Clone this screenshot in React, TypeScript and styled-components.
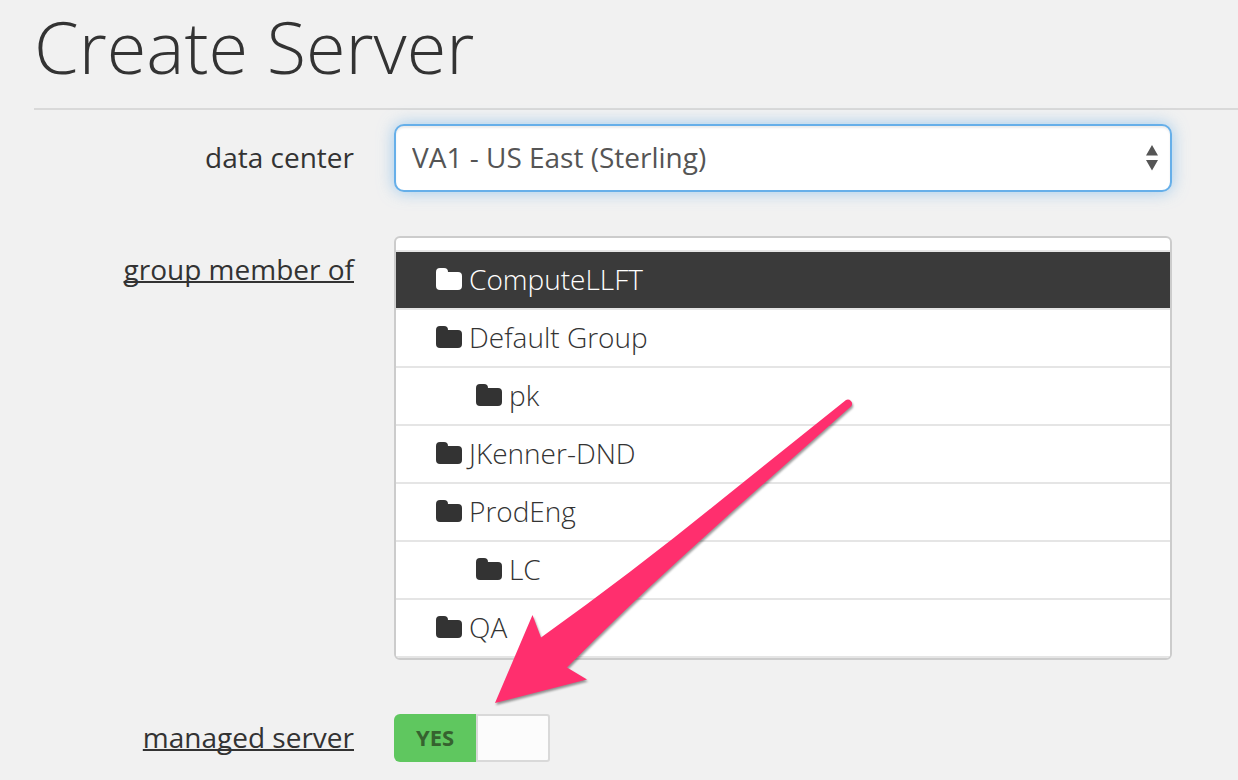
import React, { useState } from "react";
import styled, { createGlobalStyle } from "styled-components";

const GlobalStyle = createGlobalStyle`
  *, *::before, *::after { box-sizing: border-box; }
  body {
    margin: 0;
    background: #f1f1f1;
    color: #333;
    font-family: "Open Sans", sans-serif;
    font-size: 28px;
  }
`;

const Page = styled.main`
  position: relative;
  padding-left: 34px;
`;

const Title = styled.h1`
  margin: 0;
  padding-bottom: 16px;
  border-bottom: 2px solid #d9d9d9;
  font-size: 72px;
  font-weight: 300;
  line-height: 92px;
`;

const Form = styled.form`
  display: flex;
  flex-direction: column;
  gap: 44px;
  padding: 14px 66px 0 0;
`;

const Field = styled.div`
  display: grid;
  grid-template-columns: 320px minmax(0, 1fr);
  column-gap: 40px;
  align-items: start;
`;

const Label = styled.label<{ $hint?: boolean }>`
  text-align: right;
  line-height: 66px;
  text-decoration: ${(p) => (p.$hint ? "underline" : "none")};
  text-decoration-thickness: 2px;
  text-decoration-skip-ink: none;
`;

const SelectBox = styled.div`
  position: relative;
  display: flex;
`;

const Select = styled.select`
  appearance: none;
  flex: 1;
  height: 68px;
  padding: 0 48px 2px 16px;
  border: 2px solid #66afe9;
  border-radius: 10px;
  outline: 0;
  background: #fff;
  color: #555;
  font: inherit;
  box-shadow: inset 0 2px 2px rgba(0, 0, 0, 0.075), 0 0 16px rgba(102, 175, 233, 0.6);
`;

const Stepper = styled.svg`
  position: absolute;
  right: 14px;
  top: 21px;
  pointer-events: none;
`;

const GroupList = styled.ul`
  display: flex;
  flex-direction: column;
  justify-content: flex-end;
  height: 424px;
  margin: 0;
  padding: 0;
  overflow: hidden;
  list-style: none;
  background: #fff;
  border: 2px solid #ccc;
  border-radius: 6px;
`;

const GroupItem = styled.li`
  flex: none;
  height: 58px;
  border-bottom: 2px solid #e5e5e5;
`;

const GroupButton = styled.button<{ $depth: number; $selected: boolean }>`
  display: flex;
  align-items: center;
  gap: 7px;
  width: 100%;
  height: 56px;
  padding: 0 0 2px ${(p) => 40 * p.$depth}px;
  border: 0;
  background: ${(p) => (p.$selected ? "#3a3a3a" : "#fff")};
  color: ${(p) => (p.$selected ? "#fff" : "#333")};
  font: inherit;
  font-weight: 300;
  text-align: left;
`;

const Toggle = styled.label`
  display: flex;
  width: 156px;
  height: 48px;
  margin-top: 10px;
`;

const ToggleInput = styled.input`
  position: absolute;
  opacity: 0;
`;

const ToggleState = styled.span`
  flex: 1;
  background: #5fc75f;
  border-radius: 6px 0 0 6px;
  color: #36622f;
  font-size: 22px;
  font-weight: 700;
  line-height: 46px;
  text-align: center;
`;

const ToggleHandle = styled.span`
  width: 74px;
  background: #fcfcfc;
  border: 2px solid #d9d9d9;
  border-radius: 0 3px 3px 0;
`;

const Pointer = styled.svg`
  position: absolute;
  left: 485px;
  top: 390px;
  overflow: visible;
  pointer-events: none;
  filter: drop-shadow(1px 2px 1px rgba(0, 0, 0, 0.4));
`;

const groups = [
  { name: "ComputeLLFT", depth: 1 },
  { name: "Default Group", depth: 1 },
  { name: "pk", depth: 2 },
  { name: "JKenner-DND", depth: 1 },
  { name: "ProdEng", depth: 1 },
  { name: "LC", depth: 2 },
  { name: "QA", depth: 1 },
];

const FolderIcon = () => (
  <svg width="26" height="22" viewBox="0 0 26 22" fill="currentColor" aria-hidden="true">
    <path d="M0 4a4 4 0 0 1 4-4h4a4 4 0 0 1 4 4h10a4 4 0 0 1 4 4v10a4 4 0 0 1-4 4H4a4 4 0 0 1-4-4z" />
  </svg>
);

export default function App() {
  const [selected, setSelected] = useState("ComputeLLFT");
  const [managed, setManaged] = useState(true);

  return (
    <>
      <GlobalStyle />
      <Page>
        <Title>Create Server</Title>
        <Form>
          <Field>
            <Label htmlFor="data-center">data center</Label>
            <SelectBox>
              <Select id="data-center">
                <option>VA1 - US East (Sterling)</option>
              </Select>
              <Stepper width="12" height="26" viewBox="0 0 12 26" fill="#555" aria-hidden="true">
                <path d="M6 0l6 10.500H0zM6 25.500L0 15h12z" />
              </Stepper>
            </SelectBox>
          </Field>
          <Field>
            <Label as="span" id="group-label" $hint>
              group member of
            </Label>
            <GroupList aria-labelledby="group-label">
              <GroupItem />
              {groups.map((g) => (
                <GroupItem key={g.name}>
                  <GroupButton
                    type="button"
                    $depth={g.depth}
                    $selected={g.name === selected}
                    aria-pressed={g.name === selected}
                    onClick={() => setSelected(g.name)}
                  >
                    <FolderIcon />
                    {g.name}
                  </GroupButton>
                </GroupItem>
              ))}
            </GroupList>
          </Field>
          <Field>
            <Label htmlFor="managed" $hint>
              managed server
            </Label>
            <Toggle>
              <ToggleInput
                id="managed"
                type="checkbox"
                checked={managed}
                onChange={(e) => setManaged(e.target.checked)}
              />
              <ToggleState>{managed ? "YES" : "NO"}</ToggleState>
              <ToggleHandle />
            </Toggle>
          </Field>
        </Form>
        <Pointer width="370" height="320" viewBox="485 390 370 320" aria-hidden="true">
          <path
            fill="#ff2f6e"
            d="M495 703L532.500 615L541 637.500Q630 574 720 501L846 400A4.300 4.300 0 0 1 851.500 406L734 510L680 559Q624 610 567 667.500L587 679.500Z"
          />
        </Pointer>
      </Page>
    </>
  );
}
